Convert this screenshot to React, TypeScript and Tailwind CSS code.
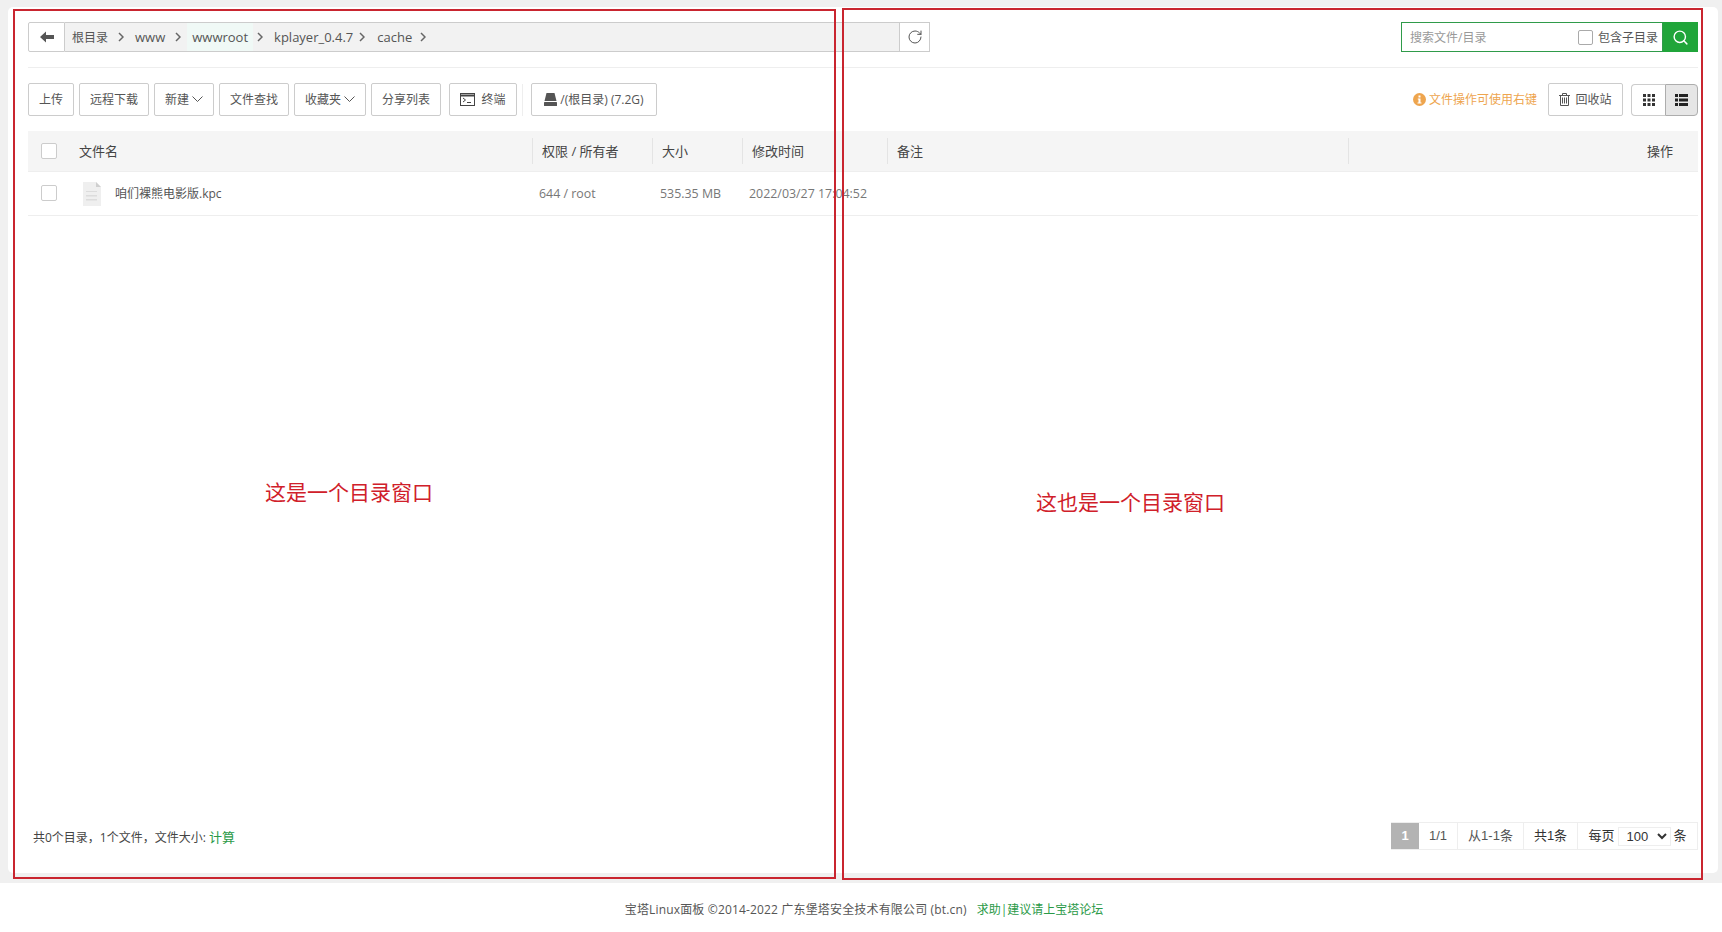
import { RotateCw, Search } from "lucide-react";

const crumbs = [
  { name: "根目录", cls: "pl-[7px] pr-[7px] text-xs" },
  { name: "www", cls: "pl-[8px] pr-[7px]" },
  { name: "wwwroot", cls: "ml-[3px] px-[5px] mr-[1px] bg-[#f0f9f6]" },
  { name: "kplayer_0.4.7", cls: "pl-[8px] pr-[3px]" },
  { name: "cache", cls: "pl-[9px] pr-[5px]" },
];

const btn =
  "h-[33px] flex items-center justify-center border border-[#ccc] rounded-[2px] bg-white text-xs text-[#555] shrink-0";

function ArrowLeft() {
  return (
    <svg width="14" height="12" viewBox="0 0 14 12" fill="#555">
      <path d="M0 6 6 .5V4h8v4H6v3.500z" />
    </svg>
  );
}

function CrumbArrow() {
  return (
    <span className="w-[12px] flex justify-center">
      <svg width="6" height="10" viewBox="0 0 6 10" fill="none" stroke="#666" strokeWidth="1.5">
        <path d="M1 1l4 4-4 4" />
      </svg>
    </span>
  );
}

function Caret() {
  return (
    <svg width="11" height="7" viewBox="0 0 11 7" fill="none" stroke="#555">
      <path d="M.5 .5l5 5 5-5" />
    </svg>
  );
}

function FileIcon() {
  return (
    <svg width="18" height="24" viewBox="0 0 18 24">
      <path d="M0 0h13l5 5v19H0z" fill="#efefef" />
      <path d="M13 0l5 5h-5z" fill="#cfcfcf" />
      <path d="M3 9h11v1H3zM3 13h11v1.500H3zM3 17h11v1.500H3z" fill="#dcdcdc" />
    </svg>
  );
}

function TerminalIcon() {
  return (
    <svg width="15" height="13" viewBox="0 0 15 13" fill="none" stroke="#444">
      <rect x=".5" y=".5" width="14" height="12" />
      <path d="M0 2.500h15" strokeWidth="2" />
      <path d="M3 5l2.500 2L3 9M7 9.500h4" />
    </svg>
  );
}

function DiskIcon() {
  return (
    <svg width="13" height="13" viewBox="0 0 13 13" fill="#555">
      <path d="M2.500 0h8L12.500 8h-12z" />
      <rect x="0" y="9" width="13" height="4" rx=".5" />
    </svg>
  );
}

function TrashIcon() {
  return (
    <svg width="11" height="13" viewBox="0 0 11 13" fill="none" stroke="#555">
      <path d="M0 2.500h11M3.500 2.500V.5h4v2M1.500 2.500v10h8v-10M3.500 4.500v6M5.500 4.500v6M7.500 4.500v6" />
    </svg>
  );
}

function GridIcon() {
  return (
    <svg width="12" height="12" viewBox="0 0 12 12" fill="#333">
      <path d="M0 0h3v3H0zM4.500 0h3v3h-3zM9 0h3v3H9zM0 4.500h3v3H0zM4.500 4.500h3v3h-3zM9 4.500h3v3H9zM0 9h3v3H0zM4.500 9h3v3h-3zM9 9h3v3H9z" />
    </svg>
  );
}

function ListIcon() {
  return (
    <svg width="13" height="12" viewBox="0 0 13 12" fill="#222">
      <path d="M0 0h3v3H0zM4 0h9v3H4zM0 4.500h3v3H0zM4 4.500h9v3H4zM0 9h3v3H0zM4 9h9v3H4z" />
    </svg>
  );
}

function InfoIcon() {
  return (
    <svg width="13" height="13" viewBox="0 0 13 13">
      <circle cx="6.500" cy="6.500" r="6.500" fill="#eea54e" />
      <path d="M5.500 2.500h2v2h-2zM4.800 5.500h2.700v4h1v1h-4v-1h1v-3h-.7z" fill="#fff" />
    </svg>
  );
}

function Check({ cls }: { cls: string }) {
  return (
    <input
      type="checkbox"
      className={`appearance-none block bg-white border rounded-[2px] ${cls}`}
    />
  );
}

function HeadCell({ label }: { label: string }) {
  return (
    <div className="flex items-center h-[26px] border-l border-[#e4e4e4] pl-[9px] pt-[2px]">
      {label}
    </div>
  );
}

export default function App() {
  return (
    <div
      className="relative h-[932px] overflow-hidden flex flex-col bg-white"
      style={{ fontFamily: '"Open Sans", "Noto Sans CJK SC", sans-serif' }}
    >
      <div className="h-[883px] bg-[#f0f0f0] pt-[7px] pl-[8px] pr-[4px] pb-[10px] flex">
        <div className="flex-1 flex flex-col bg-white rounded-[5px] pt-[15px] px-5 pb-[23px]">
          {/* path bar + search */}
          <div className="flex justify-between h-[30px]">
            <div className="flex w-[902px]">
              <div className="w-[37px] flex items-center justify-center bg-white border border-[#ccc] rounded-l-[2px]">
                <ArrowLeft />
              </div>
              <div className="flex-1 flex items-center bg-[#f2f2f2] border-y border-[#ccc] text-[13px] text-[#555]">
                {crumbs.map((c) => (
                  <div key={c.name} className="flex items-center h-full">
                    <span className={`h-full flex items-center pt-px ${c.cls}`}>{c.name}</span>
                    <CrumbArrow />
                  </div>
                ))}
              </div>
              <div className="w-[31px] flex items-center justify-center bg-white border border-[#ccc]">
                <RotateCw size={16} strokeWidth={1.5} className="text-[#555]" />
              </div>
            </div>
            <div className="flex w-[297px]">
              <div className="flex-1 flex items-center border border-[#2f9b4a] pl-2 pr-[4px] pt-px text-xs">
                <span className="flex-1 text-[#999]">搜索文件/目录</span>
                <Check cls="w-[15px] h-[15px] mr-[5px] border-[#aaa]" />
                <span className="text-[#555]">包含子目录</span>
              </div>
              <div className="w-[35px] flex items-center justify-center bg-[#20a53a]">
                <Search size={17} strokeWidth={2} className="text-white" />
              </div>
            </div>
          </div>

          <div className="h-px bg-[#eee] mt-[15px] mb-[15px]" />

          {/* toolbar */}
          <div className="flex items-center">
            <div className={`${btn} w-[46px]`}>上传</div>
            <div className={`${btn} w-[70px] ml-[5px]`}>远程下载</div>
            <div className={`${btn} w-[60px] ml-[5px] gap-[3px]`}>
              新建
              <Caret />
            </div>
            <div className={`${btn} w-[70px] ml-[5px]`}>文件查找</div>
            <div className={`${btn} w-[72px] ml-[5px] gap-[3px]`}>
              收藏夹
              <Caret />
            </div>
            <div className={`${btn} w-[70px] ml-[5px]`}>分享列表</div>
            <div className={`${btn} w-[68px] ml-[8px] gap-[6px]`}>
              <TerminalIcon />
              终端
            </div>
            <div className="h-[32px] w-px bg-[#eee] ml-[5px]" />
            <div className={`${btn} w-[126px] ml-[8px] gap-[3px]`}>
              <DiskIcon />
              /(根目录) (7.2G)
            </div>
            <div className="flex-1" />
            <div className="flex items-center gap-[3px] text-xs text-[#eea54e] mr-[11px]">
              <InfoIcon />
              文件操作可使用右键
            </div>
            <div className={`${btn} w-[75px] gap-[5px]`}>
              <TrashIcon />
              回收站
            </div>
            <div className="flex ml-[8px] h-[32px]">
              <div className="w-[34px] flex items-center justify-center border border-[#ccc] border-r-0 rounded-l-[4px] bg-white">
                <GridIcon />
              </div>
              <div className="w-[33px] flex items-center justify-center border border-[#adadad] rounded-r-[4px] bg-[#e6e6e6]">
                <ListIcon />
              </div>
            </div>
          </div>

          {/* table */}
          <div className="grid grid-cols-[504px_120px_90px_145px_461px_1fr] items-center h-[41px] bg-[#f5f5f5] border-b border-[#eee] mt-[15px] text-[13px] text-[#444]">
            <div className="flex items-center">
              <Check cls="w-4 h-4 ml-[13px] mr-[22px] border-[#ccc]" />
              <span className="pt-[2px]">文件名</span>
            </div>
            <HeadCell label="权限 / 所有者" />
            <HeadCell label="大小" />
            <HeadCell label="修改时间" />
            <HeadCell label="备注" />
            <div className="flex items-center justify-end h-[26px] border-l border-[#e4e4e4] pr-[25px] pt-[2px]">操作</div>
          </div>
          <div className="grid grid-cols-[504px_120px_90px_145px_1fr] items-center h-[44px] border-b border-[#eee] text-[12.4px] text-[#777]">
            <div className="flex items-center">
              <Check cls="w-4 h-4 ml-[13px] mr-[26px] mb-[2px] border-[#ccc]" />
              <FileIcon />
              <span className="ml-[14px] text-xs text-[#555]">咱们裸熊电影版.kpc</span>
            </div>
            <div className="pl-[7px] pt-px">644 / root</div>
            <div className="pl-[8px] pt-px">535.35 MB</div>
            <div className="pl-[7px] pt-px">2022/03/27 17:04:52</div>
            <div />
          </div>

          {/* list footer */}
          <div className="mt-auto flex items-center justify-between text-xs">
            <div className="pl-[5px] pt-[3px] text-[#444]">
              共0个目录，1个文件，文件大小: <span className="text-[13px] text-[#2b9a48]">计算</span>
            </div>
            <div
              className="flex h-[28px] border-y border-r border-[#eee] text-[13px] text-[#555]"
              style={{ fontFamily: '"Liberation Sans", "Noto Sans CJK SC", sans-serif' }}
            >
              <div className="w-[28px] flex items-center justify-center bg-[#b3b3b3] text-white font-bold">1</div>
              <div className="w-[39px] flex items-center justify-center border-r border-[#eee]">1/1</div>
              <div className="w-[66px] flex items-center justify-center border-r border-[#eee]">从1-1条</div>
              <div className="w-[54px] flex items-center justify-center border-r border-[#eee] text-[#333]">共1条</div>
              <div className="w-[119px] flex items-center justify-center gap-[3px] text-[#333]">
                每页
                <select className="w-[53px] h-[19px] border border-[#eee] bg-white text-[13px] pl-[4px]">
                  <option>100</option>
                </select>
                条
              </div>
            </div>
          </div>
        </div>
      </div>

      {/* page footer */}
      <div className="flex-1 flex items-start justify-center pt-[19px] pl-[6px] text-xs text-[#555]">
        <span className="tracking-[0.16px]">宝塔Linux面板 ©2014-2022 广东堡塔安全技术有限公司 (bt.cn)</span>
        <span className="ml-[10px] text-[#2b9a48]">求助|建议请上宝塔论坛</span>
      </div>

      {/* red annotation frames drawn over the shot */}
      <div className="absolute left-[13px] top-[9px] w-[823px] h-[870px] border-2 border-[#c9252f] pointer-events-none" />
      <div className="absolute left-[842px] top-[8px] w-[861px] h-[872px] border-2 border-[#c9252f] pointer-events-none" />
      <div className="absolute left-[265px] top-[478px] text-[21px] leading-7 text-[#d0202a]">这是一个目录窗口</div>
      <div className="absolute left-[1036px] top-[488px] text-[21px] leading-7 text-[#d0202a]">这也是一个目录窗口</div>
    </div>
  );
}
